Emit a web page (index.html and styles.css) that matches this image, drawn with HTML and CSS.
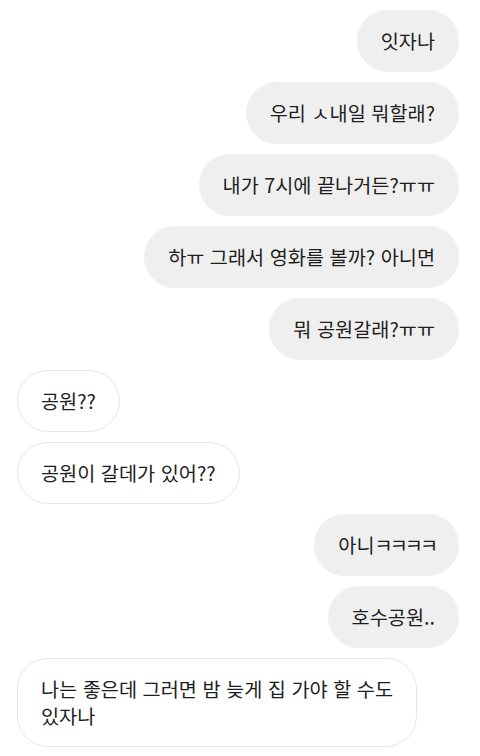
FILE: index.html
```html
<!DOCTYPE html>
<html lang="ko">
<head>
<meta charset="UTF-8">
<meta name="viewport" content="width=device-width, initial-scale=1.0">
<title>Chat</title>
<link rel="stylesheet" href="styles.css">
</head>
<body>
<div class="chat">
    <div class="msg me">잇자나</div>
    <div class="msg me">우리 ㅅ내일 뭐할래?</div>
    <div class="msg me">내가 7시에 끝나거든?ㅠㅠ</div>
    <div class="msg me">하ㅠ 그래서 영화를 볼까? 아니면</div>
    <div class="msg me">뭐 공원갈래?ㅠㅠ</div>
    <div class="msg them">공원??</div>
    <div class="msg them">공원이 갈데가 있어??</div>
    <div class="msg me">아니<span class="jamo">ㅋㅋㅋㅋ</span></div>
    <div class="msg me">호수공원..</div>
    <div class="msg them">나는 좋은데 그러면 밤 늦게 집 가야 할 수도 있자나</div>
</div>
</body>
</html>
```

FILE: styles.css
```css
/* Simple chat transcript */
body {
    margin: 0;
    padding: 0;
    background-color: #fff;
    font-family: "Noto Sans CJK KR", "Noto Sans", sans-serif;
}
.chat {
    display: flex;
    flex-direction: column;
    gap: 10px;
    padding: 10px 21px 0 17px;
}
.msg {
    max-width: 400px;
    box-sizing: border-box;
    padding: 17px 24px 18px;
    border-radius: 31px;
    font-size: 19.7px;
    line-height: 27px;
    color: #1e1e1e;
    word-break: keep-all;
}
.me {
    align-self: flex-end;
    background-color: #efefef;
}
.them {
    align-self: flex-start;
    background-color: #fff;
    border: 1px solid #e6e6e6;
    padding: 16px 23px 17px;
}
/* single jamo are drawn narrower on the phone */
.jamo {
    letter-spacing: -3px;
}
```
